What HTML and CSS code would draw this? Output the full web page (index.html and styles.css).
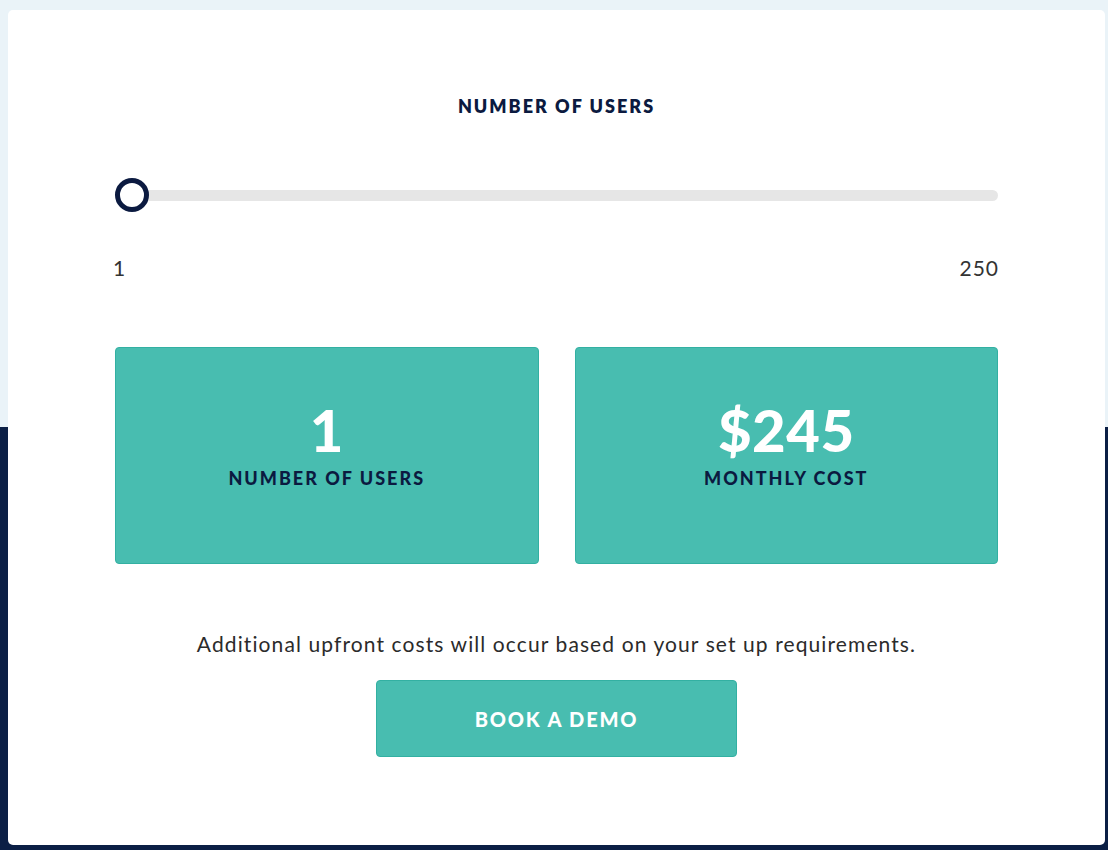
FILE: index.html
```html
<!DOCTYPE html>
<html>
<head>
<meta charset="utf-8">
<link rel="stylesheet" href="styles.css">
</head>
<body>
<div class="page">
  <div class="bg-top"></div>
  <div class="bg-bottom"></div>
  <main class="card">
    <h2 class="title">NUMBER OF USERS</h2>
    <div class="slider">
      <div class="track"></div>
      <div class="thumb"></div>
    </div>
    <div class="range-labels"><span>1</span><span>250</span></div>
    <div class="stats">
      <div class="stat"><div class="value">1</div><div class="label">NUMBER OF USERS</div></div>
      <div class="stat"><div class="value">$245</div><div class="label">MONTHLY COST</div></div>
    </div>
    <p class="note">Additional upfront costs will occur based on your set up requirements.</p>
    <a class="btn" href="#">BOOK A DEMO</a>
  </main>
</div>
</body>
</html>
```
FILE: styles.css
```css
* { box-sizing: border-box; }
html, body { margin: 0; padding: 0; }
body { font-family: "Lato", "Noto Sans", sans-serif; width: 1108px; height: 850px; overflow: hidden; }
.page { position: relative; width: 1108px; height: 850px; }
.bg-top { position: absolute; left: 0; top: 0; width: 1108px; height: 427px; background: #eaf3f8; }
.bg-bottom { position: absolute; left: 0; top: 427px; width: 1108px; height: 423px; background: #0b1f45; }
.card {
  position: absolute; left: 8px; top: 10px; width: 1097px; height: 835px;
  background: #fff; border-radius: 5px;
  padding: 0 107px; display: flex; flex-direction: column; align-items: stretch;
}
.title {
  margin: 86px 0 0; text-align: center; font-size: 18px; font-weight: 800;
  letter-spacing: 2px; color: #0b1a40; line-height: 20px;
}
.slider { position: relative; height: 36px; margin-top: 61px; }
.track { position: absolute; left: 16px; right: 0; top: 13px; height: 11px; border-radius: 6px; background: #e6e6e6; }
.thumb { position: absolute; left: 0; top: 1px; width: 34px; height: 34px; border-radius: 50%; border: 5px solid #0b1a40; background: #fff; }
.range-labels {
  display: flex; justify-content: space-between; margin-top: 43px;
  font-size: 21px; color: #333; line-height: 24px; letter-spacing: 1px;
}
.range-labels span:first-child { margin-left: -2px; }
.range-labels span:last-child { margin-right: -1px; }
.stats { display: grid; grid-template-columns: 1fr 1fr; gap: 36px; margin-top: 67px; }
.stat {
  height: 217px; background: #48bdb0; border: 1px solid #33b0a2; border-radius: 4px;
  display: flex; flex-direction: column; align-items: center; padding-top: 50px;
}
.value { color: #fff; font-size: 58px; font-weight: 900; line-height: 64px; letter-spacing: 0.5px; }
.label { margin-top: 6px; color: #0b1a40; font-size: 18px; font-weight: 900; letter-spacing: 2px; line-height: 20px; }
.note { margin: 68px 0 0; text-align: center; font-size: 21px; color: #2b2b2b; line-height: 24px; letter-spacing: 1.1px; }
.btn {
  align-self: center; margin-top: 24px; width: 361px; height: 77px;
  background: #48bdb0; border: 1px solid #33b0a2; border-radius: 4px;
  display: flex; align-items: center; justify-content: center;
  color: #fff; font-size: 20px; font-weight: 900; letter-spacing: 1.8px; text-decoration: none;
}
```
